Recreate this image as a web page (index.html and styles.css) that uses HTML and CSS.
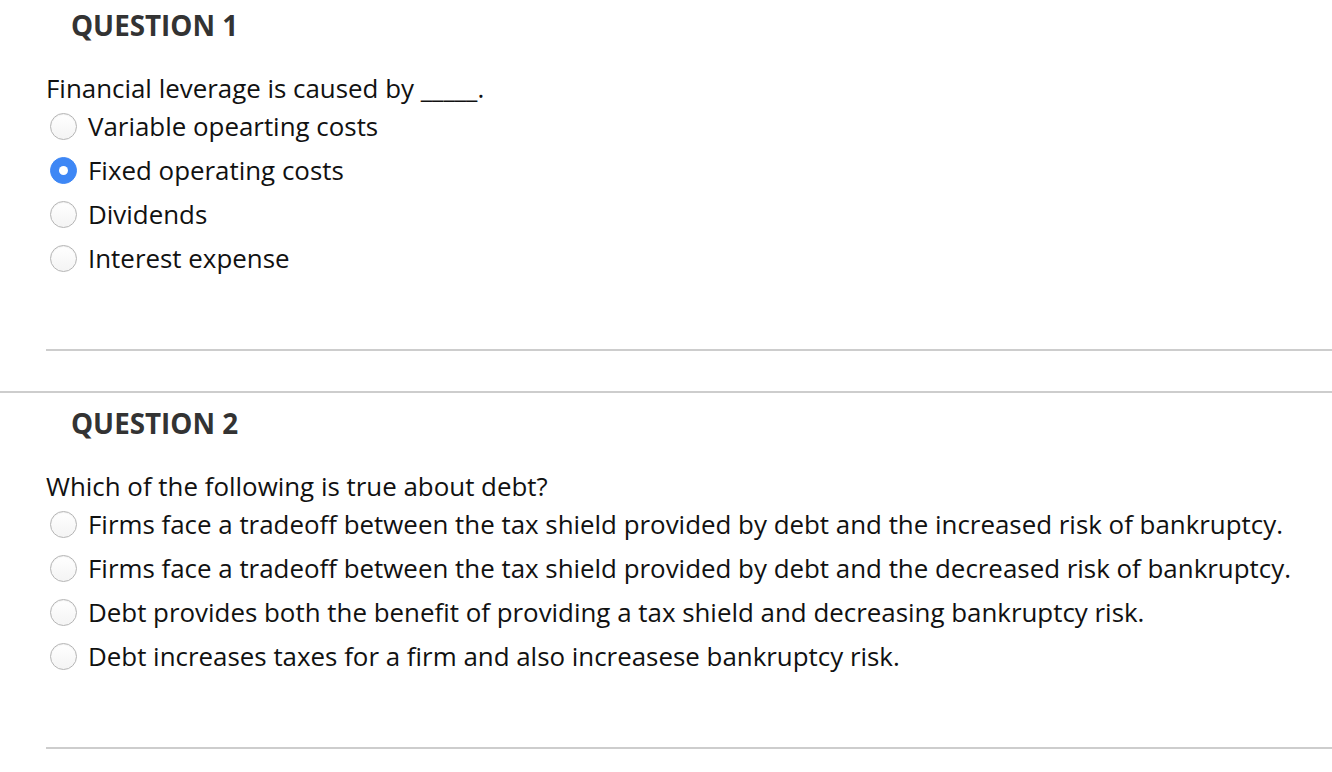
FILE: index.html
```html
<!DOCTYPE html>
<html lang="en">
<head>
<meta charset="utf-8">
<title>Questions</title>
<link rel="stylesheet" href="styles.css">
</head>
<body>
<section class="question first">
  <h2 class="q-title">QUESTION 1</h2>
  <p class="q-text">Financial leverage is caused by _____.</p>
  <ul class="options">
    <li class="option"><span class="radio"></span><span class="label">Variable opearting costs</span></li>
    <li class="option"><span class="radio checked"></span><span class="label">Fixed operating costs</span></li>
    <li class="option"><span class="radio"></span><span class="label">Dividends</span></li>
    <li class="option"><span class="radio"></span><span class="label">Interest expense</span></li>
  </ul>
  <hr class="q-rule">
</section>
<hr class="full-rule">
<section class="question">
  <h2 class="q-title">QUESTION 2</h2>
  <p class="q-text">Which of the following is true about debt?</p>
  <ul class="options">
    <li class="option"><span class="radio"></span><span class="label">Firms face a tradeoff between the tax shield provided by debt and the increased risk of bankruptcy.</span></li>
    <li class="option"><span class="radio"></span><span class="label">Firms face a tradeoff between the tax shield provided by debt and the decreased risk of bankruptcy.</span></li>
    <li class="option"><span class="radio"></span><span class="label">Debt provides both the benefit of providing a tax shield and decreasing bankruptcy risk.</span></li>
    <li class="option"><span class="radio"></span><span class="label">Debt increases taxes for a firm and also increasese bankruptcy risk.</span></li>
  </ul>
  <hr class="q-rule">
</section>
</body>
</html>
```
FILE: styles.css
```css
* { box-sizing: border-box; }
html, body {
  margin: 0;
  padding: 0;
  background: #fff;
}
body {
  font-family: "Open Sans", "Liberation Sans", sans-serif;
  color: #111;
  overflow: hidden;
}
.question {
  display: flex;
  flex-direction: column;
}
.q-title {
  margin: 12px 0 0 71px;
  font-size: 27.8px;
  line-height: 36px;
  font-weight: 700;
  color: #333;
}
.first .q-title {
  margin-top: 7px;
}
.q-text {
  margin: 27px 0 0 46px;
  font-size: 25.9px;
  line-height: 36px;
}
.options {
  list-style: none;
  margin: -2px 0 0 0;
  padding: 0 0 0 50px;
}
.option {
  display: flex;
  align-items: center;
  height: 44px;
  gap: 11px;
  font-size: 25.9px;
}
.radio {
  width: 27px;
  height: 27px;
  border-radius: 50%;
  border: 1px solid #b5b5b5;
  background: linear-gradient(#fff, #f4f4f4);
  box-shadow: inset 0 1px 1px rgba(0,0,0,0.06);
  flex: none;
  display: flex;
  align-items: center;
  justify-content: center;
}
.radio.checked {
  background: #3e87f5;
  border-color: #3e87f5;
  box-shadow: none;
}
.radio.checked::after {
  content: "";
  width: 9px;
  height: 9px;
  border-radius: 50%;
  background: #fff;
}
.label {
  line-height: 32px;
}
.q-rule {
  margin: 69px 0 0 46px;
  border: 0;
  height: 2px;
  background: #cdcdcd;
}
.full-rule {
  margin: 40px 0 0 0;
  border: 0;
  height: 2px;
  background: #cdcdcd;
}
```
